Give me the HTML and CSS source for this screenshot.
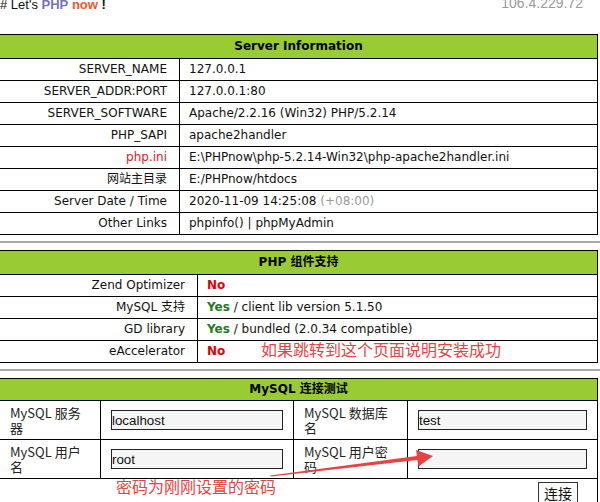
FILE: index.html
```html
<!DOCTYPE html>
<html lang="zh-CN">
<head>
<meta charset="utf-8">
<title>PHPnow</title>
<link rel="stylesheet" href="styles.css">
</head>
<body>
<div class="page">
  <div class="topbar">
    <div class="brand"># Let's <b class="php">PHP</b> <b class="now">now</b> <b>!</b></div>
    <div class="ip">106.4.229.72</div>
  </div>

  <div class="tbl t1">
    <div class="th">Server Information</div>
    <div class="k">SERVER_NAME</div><div class="v">127.0.0.1</div>
    <div class="k">SERVER_ADDR:PORT</div><div class="v">127.0.0.1:80</div>
    <div class="k">SERVER_SOFTWARE</div><div class="v">Apache/2.2.16 (Win32) PHP/5.2.14</div>
    <div class="k">PHP_SAPI</div><div class="v">apache2handler</div>
    <div class="k red">php.ini</div><div class="v">E:\PHPnow\php-5.2.14-Win32\php-apache2handler.ini</div>
    <div class="k">网站主目录</div><div class="v">E:/PHPnow/htdocs</div>
    <div class="k">Server Date / Time</div><div class="v">2020-11-09 14:25:08 <span class="muted">(+08:00)</span></div>
    <div class="k">Other Links</div><div class="v"><a href="#">phpinfo()</a> | <a href="#">phpMyAdmin</a></div>
  </div>

  <div class="sep"></div>

  <div class="tbl t2">
    <div class="th">PHP 组件支持</div>
    <div class="k">Zend Optimizer</div><div class="v"><b class="no">No</b></div>
    <div class="k">MySQL 支持</div><div class="v"><b class="yes">Yes</b> / client lib version 5.1.50</div>
    <div class="k">GD library</div><div class="v"><b class="yes">Yes</b> / bundled (2.0.34 compatible)</div>
    <div class="k">eAccelerator</div><div class="v"><b class="no">No</b></div>
  </div>

  <div class="sep"></div>

  <form class="tbl t3">
    <div class="th th3">MySQL 连接测试</div>
    <div class="lab">MySQL 服务器</div><div class="fld"><input type="text" value="localhost"></div>
    <div class="lab">MySQL 数据库名</div><div class="fld"><input type="text" value="test"></div>
    <div class="lab">MySQL 用户名</div><div class="fld"><input type="text" value="root"></div>
    <div class="lab">MySQL 用户密码</div><div class="fld"><input type="password" value=""></div>
    <div class="act"><button type="button" class="btn">连接</button></div>
  </form>

  <div class="note note1">如果跳转到这个页面说明安装成功</div>
  <div class="note note2">密码为刚刚设置的密码</div>
  <svg class="arrow" width="600" height="502" viewBox="0 0 600 502" aria-hidden="true">
    <polygon points="270,475.5 416.9,455.9 416,450 433,456 418.5,466.5 417.3,460 271,476.5" fill="#e84343"/>
  </svg>
</div>
</body>
</html>
```

FILE: styles.css
```css
html, body {
  margin: 0;
  padding: 0;
  background: #fff;
}
body {
  width: 600px;
  height: 502px;
  overflow: hidden;
}
.page {
  position: relative;
  width: 600px;
  height: 502px;
  overflow: hidden;
  font-family: "DejaVu Sans", "Noto Sans CJK SC", sans-serif;
  font-size: 12px;
  color: #111;
}
.topbar {
  display: flex;
  justify-content: space-between;
  align-items: flex-start;
  height: 10px;
  font-family: "Liberation Sans", Arial, sans-serif;
}
.brand {
  font-size: 13px;
  line-height: 10px;
  color: #111;
  white-space: nowrap;
}
.brand .php { color: #7474b8; }
.brand .now { color: #f2572a; }
.ip {
  font-size: 14px;
  line-height: 6px;
  color: #9a9a9a;
  margin-right: 17px;
}

.tbl {
  display: grid;
  box-sizing: border-box;
  width: 599px;
  margin: 0 0 0 -1px;
  border-top: 1px solid #000;
  border-left: 1px solid #000;
}
.t1 {
  margin-top: 24px;
  grid-template-columns: 180px 418px;
}
.t2 {
  grid-template-columns: 198px 400px;
}
.t3 {
  grid-template-columns: 101px 193px 114px 190px;
}
.tbl > div {
  box-sizing: border-box;
  border-right: 1px solid #000;
  border-bottom: 1px solid #000;
}
.th {
  grid-column: 1 / -1;
  height: 24px;
  line-height: 23px;
  text-align: center;
  font-weight: bold;
  background: #99cc33;
  color: #000;
}
.tbl > .th3 {
  height: 22px;
  line-height: 21px;
}
.k, .v {
  height: 22px;
  line-height: 21px;
  white-space: nowrap;
}
.k {
  text-align: right;
  padding-right: 12px;
}
.v {
  padding-left: 9px;
}
.red { color: #e02020; }
.muted { color: #9a9a9a; }
.v a { color: #111; text-decoration: none; }
.no { color: #e00000; }
.yes { color: #237a23; }

.sep {
  height: 2px;
  background: #a9a9a9;
  margin: 6px 0 7px;
}

.lab {
  height: 39px;
  display: flex;
  align-items: center;
  padding: 0 16px 0 10px;
  font-family: "Noto Sans CJK SC", sans-serif;
  font-size: 13px;
  line-height: 15px;
  color: #222;
}
.fld {
  height: 39px;
  display: flex;
  align-items: center;
  padding: 0 10px;
}
.fld input {
  box-sizing: border-box;
  width: 100%;
  height: 20px;
  margin: 0;
  padding: 0;
  border: 1px solid #222;
  background: #f5f5f5;
  font-family: "Liberation Sans", Arial, sans-serif;
  font-size: 13.33px;
  color: #111;
  outline: none;
}
.tbl > .act {
  grid-column: 1 / -1;
  height: 40px;
  border-bottom: none;
  text-align: right;
  padding: 3px 19px 0 0;
}
.btn {
  margin: 0;
  padding: 1px 5px;
  border: 1px solid #333;
  border-radius: 0;
  background: #fbfbfb;
  font-family: "Noto Sans CJK SC", sans-serif;
  font-size: 14px;
  line-height: 18px;
  color: #111;
}

.note {
  position: absolute;
  font-family: "Noto Sans CJK SC", sans-serif;
  font-size: 16px;
  line-height: 18px;
  color: #e84343;
  white-space: nowrap;
}
.note1 { left: 261px; top: 340px; }
.note2 { left: 116px; top: 477px; }
.arrow {
  position: absolute;
  left: 0;
  top: 0;
  pointer-events: none;
}
```
